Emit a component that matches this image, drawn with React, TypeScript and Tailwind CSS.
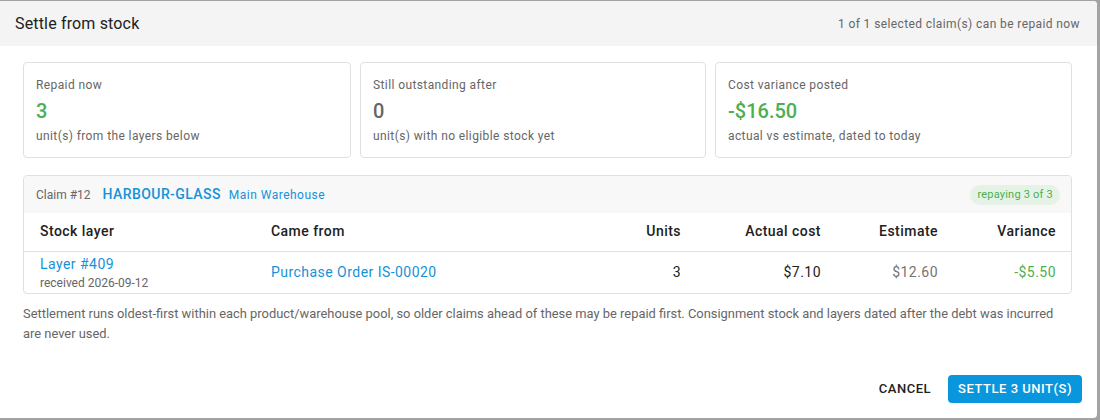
const blue = "text-[#1592d8]"

function StatCard({ label, value, sub, tone, className }: { label: string; value: string; sub: string; tone: string; className: string }) {
  return (
    <div className={`border border-[#e0e0e0] rounded-[4px] px-[12px] pt-[14px] pb-[13px] ${className}`}>
      <div className="text-[12px] leading-[16px] tracking-[0.033em] text-[#666]">{label}</div>
      <div className={`text-[20px] leading-[26px] mt-[5px] font-medium ${tone}`}>{value}</div>
      <div className="text-[12px] leading-[16px] tracking-[0.033em] text-[#666] mt-[4px]">{sub}</div>
    </div>
  )
}

export default function App() {
  return (
    <div className="w-[1100px] h-[420px] bg-[#a3a3a3] overflow-hidden font-['Roboto','Liberation_Sans',sans-serif]">
      <div className="ml-[-4px] mt-[1px] w-[1101px] h-[417px] bg-white rounded-[4px] flex flex-col overflow-hidden">
        {/* Header */}
        <div className="h-[45px] bg-[#f4f4f4] flex items-center justify-between pl-[19px] pr-[17px] shrink-0">
          <h2 className="text-[16px] tracking-[0.01em] text-[#212121]">Settle from stock</h2>
          <span className="text-[12px] tracking-[0.033em] text-[#666]">1 of 1 selected claim(s) can be repaid now</span>
        </div>

        <div className="pl-[27px] pr-[25px] pt-[16px]">
          {/* Summary cards */}
          <div className="flex gap-[9px]">
            <StatCard className="w-[328px]" label="Repaid now" value="3" sub="unit(s) from the layers below" tone="text-[#4caf50]" />
            <StatCard className="w-[346px]" label="Still outstanding after" value="0" sub="unit(s) with no eligible stock yet" tone="text-[#666]" />
            <StatCard className="flex-1" label="Cost variance posted" value="-$16.50" sub="actual vs estimate, dated to today" tone="text-[#4caf50]" />
          </div>

          {/* Claim panel */}
          <div className="mt-[17px] border border-[#e0e0e0] rounded-[4px] overflow-hidden">
            <div className="h-[37px] bg-[#f8f8f8] flex items-center justify-between pl-[12px] pr-[11px]">
              <div className="flex items-baseline">
                <span className="text-[12px] text-[#666]">Claim #12</span>
                <span className={`ml-[12px] text-[14px] tracking-[0.03em] font-medium ${blue}`}>HARBOUR-GLASS</span>
                <span className={`ml-[8px] text-[12px] tracking-[0.04em] ${blue}`}>Main Warehouse</span>
              </div>
              <span className="text-[11px] leading-[20px] tracking-[0.02em] px-[7px] rounded-full bg-[#e5f3e6] text-[#4caf50]">repaying 3 of 3</span>
            </div>
            <table className="w-full text-[14px] tracking-[0.033em]">
              <thead>
                <tr className="border-b border-[#e0e0e0] h-[38px] text-[#212121]">
                  <th className="text-left font-medium pl-[16px] w-[247px]">Stock layer</th>
                  <th className="text-left font-medium">Came from</th>
                  <th className="text-right font-medium w-[120px]">Units</th>
                  <th className="text-right font-medium w-[140px]">Actual cost</th>
                  <th className="text-right font-medium w-[117px]">Estimate</th>
                  <th className="text-right font-medium w-[133px] pr-[15px]">Variance</th>
                </tr>
              </thead>
              <tbody>
                <tr className="h-[42px]">
                  <td className="pl-[16px] pt-[2px] pb-[1px] leading-[20px]">
                    <div className={blue}>Layer #409</div>
                    <div className="text-[12px] leading-[18px] tracking-normal text-[#666]">received 2026-09-12</div>
                  </td>
                  <td className={blue}>Purchase Order IS-00020</td>
                  <td className="text-right text-[#212121]">3</td>
                  <td className="text-right text-[#212121]">$7.10</td>
                  <td className="text-right text-[#757575]">$12.60</td>
                  <td className="text-right pr-[15px] text-[#4caf50]">-$5.50</td>
                </tr>
              </tbody>
            </table>
          </div>

          <p className="mt-[10px] pr-[12px] text-[12.9px] leading-[20px] text-[#666]">
            Settlement runs oldest-first within each product/warehouse pool, so older claims ahead of these may be repaid first. Consignment stock and layers dated after the debt was incurred are never used.
          </p>
        </div>

        {/* Actions */}
        <div className="mt-auto mb-[15px] flex justify-end items-center gap-[13px] pr-[15px]">
          <button className="text-[13px] font-medium tracking-[0.04em] text-[#212121] px-[4px] h-[28px]">CANCEL</button>
          <button className="text-[13px] font-medium tracking-[0.04em] text-white bg-[#0a96dc] rounded-[4px] h-[28px] px-[10px]">SETTLE 3 UNIT(S)</button>
        </div>
      </div>
    </div>
  )
}
